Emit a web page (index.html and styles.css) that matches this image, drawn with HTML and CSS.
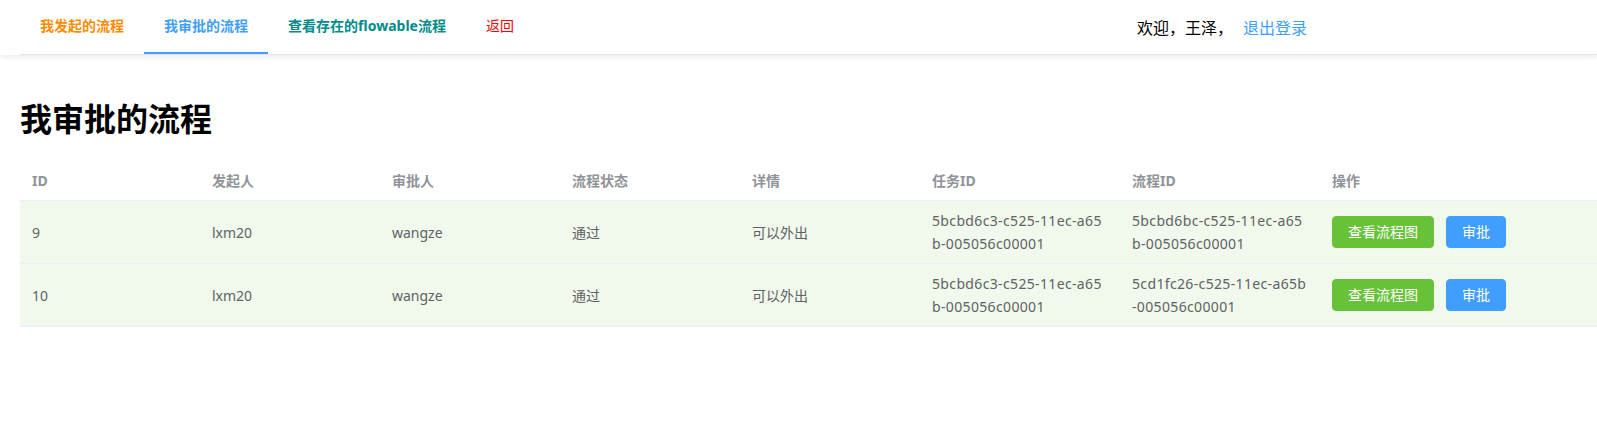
FILE: index.html
```html
<!DOCTYPE html>
<html lang="zh-CN">
<head>
<meta charset="utf-8">
<title>我审批的流程</title>
<link rel="stylesheet" href="styles.css">
</head>
<body>
<header class="topbar">
  <div class="bar">
    <nav class="menu">
      <a class="menu-item orange">我发起的流程</a>
      <a class="menu-item blue active">我审批的流程</a>
      <a class="menu-item teal">查看存在的flowable流程</a>
      <a class="menu-item red">返回</a>
    </nav>
    <div class="user">
      <span class="welcome">欢迎，王泽，</span>
      <a class="logout">退出登录</a>
    </div>
  </div>
</header>
<main class="main">
  <h1 class="title">我审批的流程</h1>
  <table class="table">
    <colgroup>
      <col class="c180"><col class="c180"><col class="c180"><col class="c180"><col class="c180"><col class="c200"><col class="c200"><col>
    </colgroup>
    <thead>
      <tr>
        <th><div class="cell">ID</div></th>
        <th><div class="cell">发起人</div></th>
        <th><div class="cell">审批人</div></th>
        <th><div class="cell">流程状态</div></th>
        <th><div class="cell">详情</div></th>
        <th><div class="cell">任务ID</div></th>
        <th><div class="cell">流程ID</div></th>
        <th><div class="cell">操作</div></th>
      </tr>
    </thead>
    <tbody>
      <tr>
        <td><div class="cell">9</div></td>
        <td><div class="cell">lxm20</div></td>
        <td><div class="cell">wangze</div></td>
        <td><div class="cell">通过</div></td>
        <td><div class="cell">可以外出</div></td>
        <td><div class="cell wrap">5bcbd6c3-c525-11ec-a65b-005056c00001</div></td>
        <td><div class="cell wrap">5bcbd6bc-c525-11ec-a65b-005056c00001</div></td>
        <td><div class="cell actions"><button class="btn btn-success">查看流程图</button><button class="btn btn-primary">审批</button></div></td>
      </tr>
      <tr>
        <td><div class="cell">10</div></td>
        <td><div class="cell">lxm20</div></td>
        <td><div class="cell">wangze</div></td>
        <td><div class="cell">通过</div></td>
        <td><div class="cell">可以外出</div></td>
        <td><div class="cell wrap">5bcbd6c3-c525-11ec-a65b-005056c00001</div></td>
        <td><div class="cell wrap">5cd1fc26-c525-11ec-a65b-005056c00001</div></td>
        <td><div class="cell actions"><button class="btn btn-success">查看流程图</button><button class="btn btn-primary">审批</button></div></td>
      </tr>
    </tbody>
  </table>
</main>
</body>
</html>
```

FILE: styles.css
```css
* { box-sizing: border-box; }
html, body {
  margin: 0;
  background: #fff;
  font-family: "Noto Sans", "Noto Sans CJK SC", sans-serif;
  color: #303133;
}
.topbar {
  height: 55px;
  padding-left: 20px;
  background: #fff;
  box-shadow: 0 2px 6px rgba(0, 0, 0, 0.08);
  position: relative;
  z-index: 1;
}
.bar {
  display: grid;
  grid-template-columns: 17fr 7fr;
  height: 55px;
  border-bottom: 1px solid #e6e6e6;
}
.menu {
  display: flex;
  height: 54px;
}
.menu-item {
  display: block;
  height: 54px;
  line-height: 52px;
  padding: 0 20px;
  font-size: 14px;
  font-weight: 700;
  border-bottom: 2px solid transparent;
  cursor: pointer;
  white-space: nowrap;
}
.menu-item.active { border-bottom-color: #409eff; }
.orange { color: #ff8c00; }
.blue { color: #409eff; }
.teal { color: #008b8b; }
.red { color: #ff0000; font-weight: 400; }
.user {
  display: flex;
  align-items: center;
  height: 54px;
  font-size: 16px;
}
.welcome { color: #000; }
.logout { color: #409eff; margin-left: 10px; cursor: pointer; }
.main {
  padding: 20px 0 0 20px;
}
.title {
  font-size: 32px;
  line-height: 42px;
  font-weight: 700;
  color: #000;
  margin: 23px 0 21px;
}
.table {
  width: 100%;
  border-collapse: separate;
  border-spacing: 0;
  table-layout: fixed;
  font-size: 14px;
  color: #606266;
}
.c180 { width: 180px; }
.c200 { width: 200px; }
.table th, .table td {
  padding: 8px 0;
  text-align: left;
  vertical-align: middle;
  border-bottom: 1px solid #ebeef5;
}
.table th {
  color: #909399;
  font-weight: 700;
  background: #fff;
}
.table tbody tr { background: #f0f9eb; }
.cell {
  padding: 0 12px;
  line-height: 23px;
}
.wrap {
  word-break: break-all;
  letter-spacing: 0.35px;
}
.actions {
  display: flex;
  align-items: center;
}
.btn {
  display: inline-flex;
  align-items: center;
  justify-content: center;
  height: 32px;
  padding: 8px 15px;
  font-family: inherit;
  font-size: 14px;
  line-height: 1;
  color: #fff;
  border-radius: 4px;
  cursor: pointer;
}
.btn + .btn { margin-left: 12px; }
.btn-success { background: #67c23a; border: 1px solid #67c23a; }
.btn-primary { background: #409eff; border: 1px solid #409eff; }
```
